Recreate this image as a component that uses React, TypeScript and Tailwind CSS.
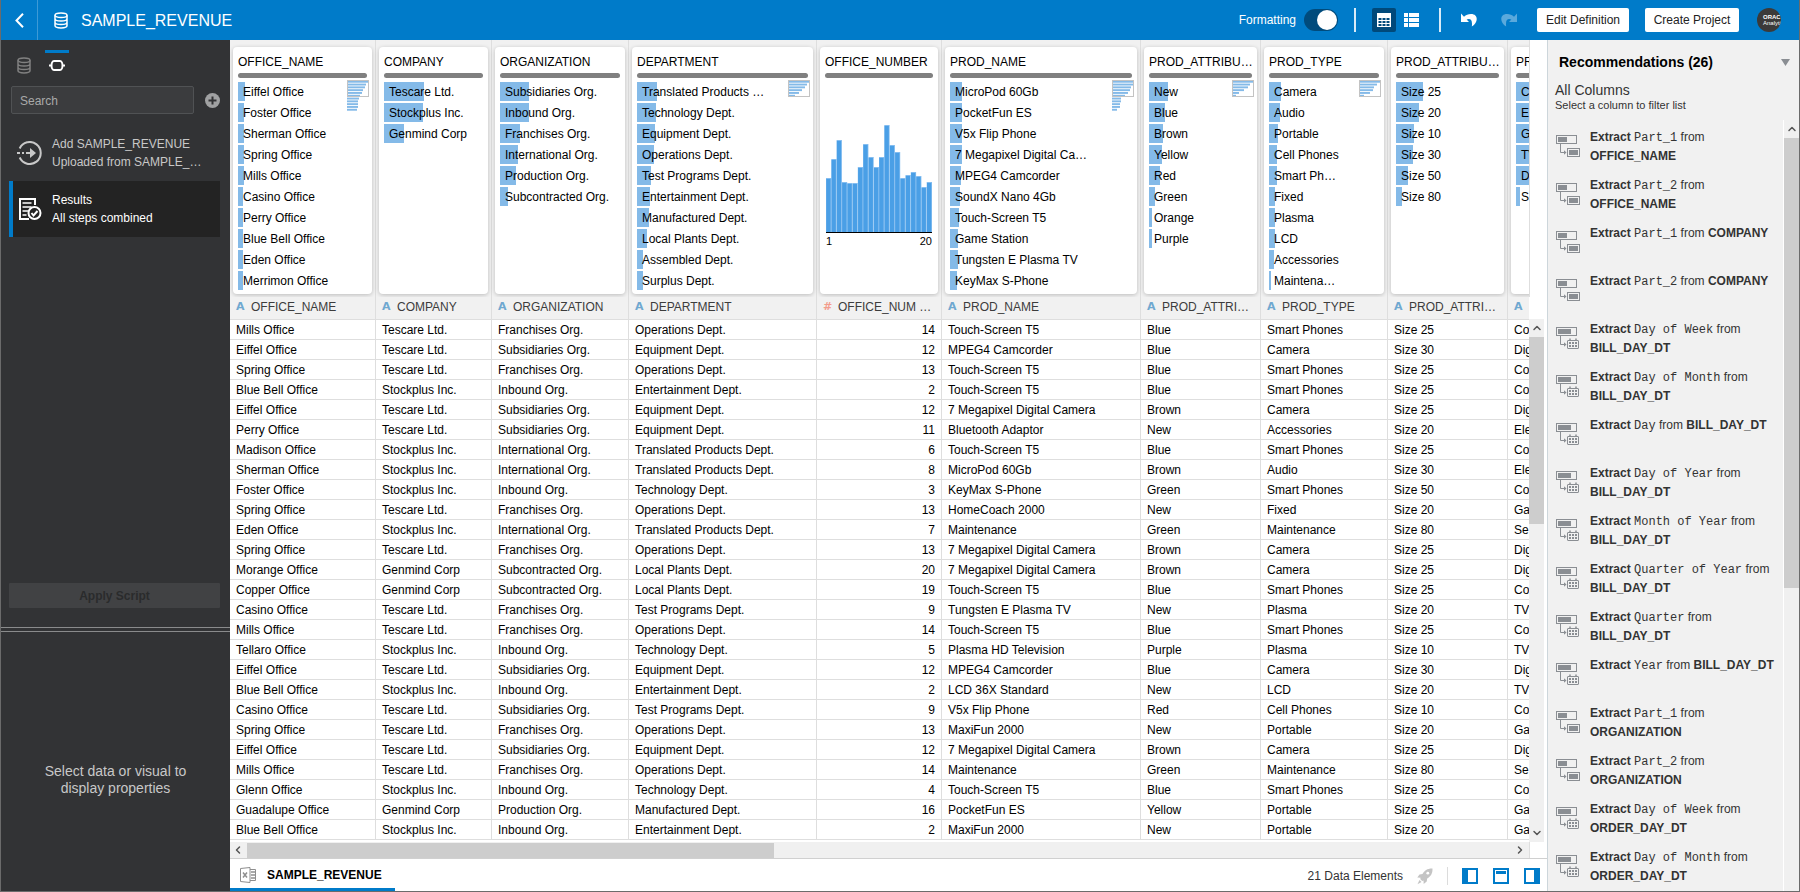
import { useState } from "react";
import clsx from "clsx";
import { ChevronDown, ChevronLeft, ChevronRight, ChevronUp } from "lucide-react";

type Valor = [label: string, bar: number];

type Column = {
  title: string;
  header: string;
  width: string;
  numeric?: boolean;
  values?: Valor[];
  overview?: number[];
};

const COLUMNS: Column[] = [
  {
    title: "OFFICE_NAME",
    header: "OFFICE_NAME",
    width: "w-[146px]",
    values: [
      ["Eiffel Office", 7],
      ["Foster Office", 6],
      ["Sherman Office", 6],
      ["Spring Office", 6],
      ["Mills Office", 6],
      ["Casino Office", 5],
      ["Perry Office", 5],
      ["Blue Bell Office", 5],
      ["Eden Office", 5],
      ["Merrimon Office", 5],
    ],
    overview: [20, 18, 17, 15, 14, 12, 12, 11, 11, 11, 10],
  },
  {
    title: "COMPANY",
    header: "COMPANY",
    width: "w-[116px]",
    values: [
      ["Tescare Ltd.", 40],
      ["Stockplus Inc.", 39],
      ["Genmind Corp", 20],
    ],
  },
  {
    title: "ORGANIZATION",
    header: "ORGANIZATION",
    width: "w-[137px]",
    values: [
      ["Subsidiaries Org.", 29],
      ["Inbound Org.", 29],
      ["Franchises Org.", 20],
      ["International Org.", 18],
      ["Production Org.", 16],
      ["Subcontracted Org.", 8],
    ],
  },
  {
    title: "DEPARTMENT",
    header: "DEPARTMENT",
    width: "w-[188px]",
    values: [
      ["Translated Products …", 20],
      ["Technology Dept.", 19],
      ["Equipment Dept.", 18],
      ["Operations Dept.", 17],
      ["Test Programs Dept.", 14],
      ["Entertainment Dept.", 13],
      ["Manufactured Dept.", 12],
      ["Local Plants Dept.", 10],
      ["Assembled Dept.", 6],
      ["Surplus Dept.", 6],
    ],
    overview: [20, 18, 16, 13, 10, 6],
  },
  {
    title: "OFFICE_NUMBER",
    header: "OFFICE_NUM …",
    width: "w-[125px]",
    numeric: true,
  },
  {
    title: "PROD_NAME",
    header: "PROD_NAME",
    width: "w-[199px]",
    values: [
      ["MicroPod 60Gb", 12],
      ["PocketFun ES", 12],
      ["V5x Flip Phone", 12],
      ["7 Megapixel Digital Ca…", 12],
      ["MPEG4 Camcorder", 11],
      ["SoundX Nano 4Gb", 10],
      ["Touch-Screen T5", 9],
      ["Game Station", 8],
      ["Tungsten E Plasma TV", 8],
      ["KeyMax S-Phone", 7],
    ],
    overview: [20, 20, 18, 17, 15, 12, 9, 9, 8, 8, 5],
  },
  {
    title: "PROD_ATTRIBU…",
    header: "PROD_ATTRI…",
    width: "w-[120px]",
    values: [
      ["New", 19],
      ["Blue", 16],
      ["Brown", 14],
      ["Yellow", 13],
      ["Red", 11],
      ["Green", 6],
      ["Orange", 3],
      ["Purple", 3],
    ],
    overview: [20, 17, 15, 11, 6, 3],
  },
  {
    title: "PROD_TYPE",
    header: "PROD_TYPE",
    width: "w-[127px]",
    values: [
      ["Camera", 12],
      ["Audio", 11],
      ["Portable", 9],
      ["Cell Phones", 8],
      ["Smart Ph…", 8],
      ["Fixed", 6],
      ["Plasma", 6],
      ["LCD", 6],
      ["Accessories", 5],
      ["Maintena…", 2],
    ],
    overview: [20, 17, 14, 13, 10, 4],
  },
  {
    title: "PROD_ATTRIBU…",
    header: "PROD_ATTRI…",
    width: "w-[120px]",
    values: [
      ["Size 25", 27],
      ["Size 20", 23],
      ["Size 10", 18],
      ["Size 30", 17],
      ["Size 50", 12],
      ["Size 80", 6],
    ],
  },
  {
    title: "PR",
    header: "",
    width: "w-[120px]",
    values: [
      ["C", 40],
      ["E", 36],
      ["G", 30],
      ["TV", 26],
      ["D", 22],
      ["S", 4],
    ],
  },
];

const ROWS: string[][] = [
  ["Mills Office", "Tescare Ltd.", "Franchises Org.", "Operations Dept.", "14", "Touch-Screen T5", "Blue", "Smart Phones", "Size 25", "Co"],
  ["Eiffel Office", "Tescare Ltd.", "Subsidiaries Org.", "Equipment Dept.", "12", "MPEG4 Camcorder", "Blue", "Camera", "Size 30", "Dig"],
  ["Spring Office", "Tescare Ltd.", "Franchises Org.", "Operations Dept.", "13", "Touch-Screen T5", "Blue", "Smart Phones", "Size 25", "Co"],
  ["Blue Bell Office", "Stockplus Inc.", "Inbound Org.", "Entertainment Dept.", "2", "Touch-Screen T5", "Blue", "Smart Phones", "Size 25", "Co"],
  ["Eiffel Office", "Tescare Ltd.", "Subsidiaries Org.", "Equipment Dept.", "12", "7 Megapixel Digital Camera", "Brown", "Camera", "Size 25", "Dig"],
  ["Perry Office", "Tescare Ltd.", "Subsidiaries Org.", "Equipment Dept.", "11", "Bluetooth Adaptor", "New", "Accessories", "Size 20", "Ele"],
  ["Madison Office", "Stockplus Inc.", "International Org.", "Translated Products Dept.", "6", "Touch-Screen T5", "Blue", "Smart Phones", "Size 25", "Co"],
  ["Sherman Office", "Stockplus Inc.", "International Org.", "Translated Products Dept.", "8", "MicroPod 60Gb", "Brown", "Audio", "Size 30", "Ele"],
  ["Foster Office", "Stockplus Inc.", "Inbound Org.", "Technology Dept.", "3", "KeyMax S-Phone", "Green", "Smart Phones", "Size 50", "Co"],
  ["Spring Office", "Tescare Ltd.", "Franchises Org.", "Operations Dept.", "13", "HomeCoach 2000", "New", "Fixed", "Size 20", "Ga"],
  ["Eden Office", "Stockplus Inc.", "International Org.", "Translated Products Dept.", "7", "Maintenance", "Green", "Maintenance", "Size 80", "Se"],
  ["Spring Office", "Tescare Ltd.", "Franchises Org.", "Operations Dept.", "13", "7 Megapixel Digital Camera", "Brown", "Camera", "Size 25", "Dig"],
  ["Morange Office", "Genmind Corp", "Subcontracted Org.", "Local Plants Dept.", "20", "7 Megapixel Digital Camera", "Brown", "Camera", "Size 25", "Dig"],
  ["Copper Office", "Genmind Corp", "Subcontracted Org.", "Local Plants Dept.", "19", "Touch-Screen T5", "Blue", "Smart Phones", "Size 25", "Co"],
  ["Casino Office", "Tescare Ltd.", "Franchises Org.", "Test Programs Dept.", "9", "Tungsten E Plasma TV", "New", "Plasma", "Size 20", "TV"],
  ["Mills Office", "Tescare Ltd.", "Franchises Org.", "Operations Dept.", "14", "Touch-Screen T5", "Blue", "Smart Phones", "Size 25", "Co"],
  ["Tellaro Office", "Stockplus Inc.", "Inbound Org.", "Technology Dept.", "5", "Plasma HD Television", "Purple", "Plasma", "Size 10", "TV"],
  ["Eiffel Office", "Tescare Ltd.", "Subsidiaries Org.", "Equipment Dept.", "12", "MPEG4 Camcorder", "Blue", "Camera", "Size 30", "Dig"],
  ["Blue Bell Office", "Stockplus Inc.", "Inbound Org.", "Entertainment Dept.", "2", "LCD 36X Standard", "New", "LCD", "Size 20", "TV"],
  ["Casino Office", "Tescare Ltd.", "Subsidiaries Org.", "Test Programs Dept.", "9", "V5x Flip Phone", "Red", "Cell Phones", "Size 10", "Co"],
  ["Spring Office", "Tescare Ltd.", "Franchises Org.", "Operations Dept.", "13", "MaxiFun 2000", "New", "Portable", "Size 20", "Ga"],
  ["Eiffel Office", "Tescare Ltd.", "Subsidiaries Org.", "Equipment Dept.", "12", "7 Megapixel Digital Camera", "Brown", "Camera", "Size 25", "Dig"],
  ["Mills Office", "Tescare Ltd.", "Franchises Org.", "Operations Dept.", "14", "Maintenance", "Green", "Maintenance", "Size 80", "Se"],
  ["Glenn Office", "Stockplus Inc.", "Inbound Org.", "Technology Dept.", "4", "Touch-Screen T5", "Blue", "Smart Phones", "Size 25", "Co"],
  ["Guadalupe Office", "Genmind Corp", "Production Org.", "Manufactured Dept.", "16", "PocketFun ES", "Yellow", "Portable", "Size 25", "Ga"],
  ["Blue Bell Office", "Stockplus Inc.", "Inbound Org.", "Entertainment Dept.", "2", "MaxiFun 2000", "New", "Portable", "Size 20", "Ga"],
];

const HISTOGRAM = [54, 73, 92, 50, 49, 49, 65, 88, 75, 65, 75, 107, 87, 80, 54, 57, 60, 56, 45, 50];

const RECOMMENDATIONS: [part: string, column: string][] = [
  ["Part_1", "OFFICE_NAME"],
  ["Part_2", "OFFICE_NAME"],
  ["Part_1", "COMPANY"],
  ["Part_2", "COMPANY"],
  ["Day of Week", "BILL_DAY_DT"],
  ["Day of Month", "BILL_DAY_DT"],
  ["Day", "BILL_DAY_DT"],
  ["Day of Year", "BILL_DAY_DT"],
  ["Month of Year", "BILL_DAY_DT"],
  ["Quarter of Year", "BILL_DAY_DT"],
  ["Quarter", "BILL_DAY_DT"],
  ["Year", "BILL_DAY_DT"],
  ["Part_1", "ORGANIZATION"],
  ["Part_2", "ORGANIZATION"],
  ["Day of Week", "ORDER_DAY_DT"],
  ["Day of Month", "ORDER_DAY_DT"],
];

function DatabaseIcon({ className }: { className?: string }) {
  return (
    <svg width="14" height="17" viewBox="0 0 14 17" fill="none" stroke="currentColor" strokeWidth="1.5" className={className}>
      <ellipse cx="7" cy="3.2" rx="6" ry="2.3" />
      <path d="M1 3.2v10.4c0 1.3 2.7 2.4 6 2.4s6-1.1 6-2.4V3.2M1 6.8c0 1.3 2.7 2.3 6 2.3s6-1 6-2.3M1 10.3c0 1.3 2.7 2.3 6 2.3s6-1 6-2.3" />
    </svg>
  );
}

function UndoIcon({ className }: { className?: string }) {
  return (
    <svg width="16" height="14" viewBox="0 0 16 14" fill="currentColor" className={className}>
      <path d="M0 .5V9h8L5.6 6.6C9 5.2 11.8 6.6 10.8 13.5 17.5 9.5 17.5 1 10 1 7 1 5 2 3 3.7Z" />
    </svg>
  );
}

function ExtractIcon({ date }: { date: boolean }) {
  return (
    <svg width="24" height="23" viewBox="0 0 24 23" fill="none" stroke="#8a8e93" className="mt-[7px] shrink-0">
      <rect x="0.5" y="0.5" width="20" height="8" />
      <rect x="2" y="2" width={date ? 13 : 9} height="5" fill="#8a8e93" stroke="none" />
      <path d="M4.5 9v8.5H9" />
      <path d="M8 15.3l2.5 2.2L8 19.7Z" fill="#8a8e93" stroke="none" />
      {date ? (
        <>
          <rect x="11.5" y="13.5" width="11" height="8" rx="0.5" />
          <path d="M14 11.5v2M20 11.5v2" strokeWidth="1.5" />
          <path d="M13 16h2m1 0h2m1 0h2M13 19h2m1 0h2m1 0h2" strokeWidth="2" />
        </>
      ) : (
        <>
          <rect x="11.5" y="13.5" width="12" height="8" />
          <rect x="13" y="15" width="9" height="5" fill="#8a8e93" stroke="none" />
        </>
      )}
    </svg>
  );
}

function Overview({ bars }: { bars: number[] }) {
  return (
    <svg width="22" height="32" viewBox="0 0 22 32" className="absolute right-[3px] top-[33px]">
      {bars.map((w, i) => (
        <rect key={i} x={i < 6 ? 1 : 0} y={0.8 + i * 2.8} width={w} height="1.9" fill="#84bae8" />
      ))}
      <rect x="0.5" y="0.5" width="21" height="16" fill="none" stroke="#c3c3c3" />
    </svg>
  );
}

function Histogram() {
  return (
    <div className="mt-11 px-px">
      <svg viewBox="0 0 106 111" className="block w-full">
        {HISTOGRAM.map((h, i) => (
          <g key={i}>
            <rect x={i * 5.3} y={110 - h} width="5.3" height={h} fill="#84bdf0" />
            <rect x={i * 5.3 + 0.3} y={111 - h} width="4.2" height={h - 1} fill="#4a9fe6" />
          </g>
        ))}
        <rect y="110" width="106" height="1" fill="#000" />
      </svg>
      <div className="flex justify-between text-[11px] leading-4">
        <span>1</span>
        <span>20</span>
      </div>
    </div>
  );
}

function ColumnCard({ column }: { column: Column }) {
  return (
    <div className={clsx("shrink-0 border-r border-[#dedede] px-[3px] pt-[7px] pb-[3px]", column.width)}>
      <div className="relative h-[247px] rounded-[4px] bg-white px-[5px] pt-1.5 shadow-[0_1px_4px_rgba(0,0,0,0.22)]">
        <h3 className="mb-px overflow-hidden whitespace-nowrap leading-[19px]">{column.title}</h3>
        <div className="mb-1 h-[5px] rounded-full bg-[#808080]" />
        {column.numeric && <Histogram />}
        {column.values && (
          <ul className="flex flex-col gap-0.5">
            {column.values.map(([label, bar]) => (
              <li key={label} className="relative h-[19px] whitespace-nowrap pl-[5px] leading-[21px]">
                <span className="absolute inset-y-0 left-0 bg-[#84bae8]" style={{ width: bar }} />
                <span className="relative">{label}</span>
              </li>
            ))}
          </ul>
        )}
        {column.overview && <Overview bars={column.overview} />}
      </div>
    </div>
  );
}

function TopBar() {
  const [formatting, setFormatting] = useState(true);

  return (
    <header className="flex h-10 shrink-0 items-center bg-[#007bc9] text-white">
      <button type="button" aria-label="Back" className="flex h-10 w-[37px] items-center justify-center border-r border-[#3d9ad6]">
        <svg width="9" height="15" viewBox="0 0 9 15" fill="none" stroke="currentColor" strokeWidth="2">
          <path d="M8 .8 1.5 7.5 8 14.2" />
        </svg>
      </button>
      <DatabaseIcon className="ml-4" />
      <h1 className="ml-[13px] pt-0.5 text-base">SAMPLE_REVENUE</h1>

      <div className="ml-auto flex items-center pr-[18px]">
        <label className="flex items-center gap-2">
          Formatting
          <input
            type="checkbox"
            checked={formatting}
            onChange={(e) => setFormatting(e.target.checked)}
            className="relative h-[22px] w-[34px] appearance-none rounded-full bg-[#004b7c] before:absolute before:left-0 before:top-px before:h-5 before:w-5 before:rounded-full before:bg-white checked:before:left-[13px]"
          />
        </label>
        <span className="ml-4 h-6 w-0.5 bg-[#d9ebf7]" />
        <button type="button" aria-label="Grid view" className="ml-4 flex h-6 w-6 items-center justify-center rounded-[2px] bg-[#00497a]">
          <svg width="14" height="14" viewBox="0 0 14 14">
            <rect width="14" height="14" fill="#fff" />
            <path d="M1.5 5h3v2h-3zM5.5 5h3v2h-3zM9.5 5h3v2h-3zM1.5 8h3v2h-3zM5.5 8h3v2h-3zM9.5 8h3v2h-3zM1.5 11h3v2h-3zM5.5 11h3v2h-3zM9.5 11h3v2h-3z" fill="#00497a" />
          </svg>
        </button>
        <button type="button" aria-label="List view" className="ml-2">
          <svg width="15" height="14" viewBox="0 0 15 14" fill="#fff">
            <path d="M0 0h4v4H0zM5 0h10v4H5zM0 5h4v4H0zM5 5h10v4H5zM0 10h4v4H0zM5 10h10v4H5z" />
          </svg>
        </button>
        <span className="ml-5 h-6 w-0.5 bg-[#d9ebf7]" />
        <button type="button" aria-label="Undo" className="ml-5">
          <UndoIcon />
        </button>
        <button type="button" aria-label="Redo" className="ml-6 text-[#5aa9dc]">
          <UndoIcon className="-scale-x-100" />
        </button>
        <button type="button" className="ml-5 h-6 w-[92px] rounded-[2px] bg-white text-[#222]">
          Edit Definition
        </button>
        <button type="button" className="ml-4 h-6 w-[94px] rounded-[2px] bg-white text-[#222]">
          Create Project
        </button>
        <div className="ml-[18px] flex h-6 w-6 flex-col justify-center overflow-hidden whitespace-nowrap rounded-full bg-[#3b3a39] pl-1.5 text-[6px] leading-[6px]">
          <span className="font-bold">ORAC</span>
          <span>Analytic</span>
        </div>
      </div>
    </header>
  );
}

function Sidebar() {
  const [search, setSearch] = useState("");

  return (
    <aside className="flex w-[229px] shrink-0 flex-col bg-[#323335] text-[#c8c8c8]">
      <div className="flex h-[587px] flex-col pr-2.5 pl-2">
        <div className="flex h-[46px] items-start pt-2.5">
          <button type="button" aria-label="Data" className="mt-[7px] ml-2 text-[#808080]">
            <DatabaseIcon />
          </button>
          <button type="button" aria-label="Steps" className="ml-[14px] flex h-7 w-6 flex-col items-center border-t-3 border-[#007bc9] pt-[7px] text-white">
            <svg width="16" height="11" viewBox="0 0 16 11" fill="none" stroke="currentColor" strokeWidth="2">
              <path d="M5 1h6c1.500 0 2.500 2.500 2.500 4.500S12.500 10 11 10H5C3.500 10 2.500 7.500 2.500 5.500S3.500 1 5 1ZM0 5.500h2.500M13.500 5.500H16" />
            </svg>
          </button>
        </div>
        <div className="flex items-center pl-0.5">
          <input
            type="text"
            aria-label="Search"
            placeholder="Search"
            value={search}
            onChange={(e) => setSearch(e.target.value)}
            className="h-7 w-[183px] rounded-[2px] border border-[#505254] bg-[#3b3c3e] px-2 pt-0.5 placeholder:text-[#a9a9a9]"
          />
          <button type="button" aria-label="Add step" className="ml-[11px]">
            <svg width="15" height="15" viewBox="0 0 15 15">
              <circle cx="7.5" cy="7.5" r="7.5" fill="#a0a1a2" />
              <path d="M7.5 3.5v8M3.5 7.5h8" stroke="#323335" strokeWidth="2" />
            </svg>
          </button>
        </div>

        <button type="button" className="mt-[11px] flex h-14 items-center gap-2.5 pl-2 text-left leading-[18px]">
          <svg width="25" height="24" viewBox="0 0 25 24" fill="none" stroke="currentColor" strokeWidth="2">
            <path d="M2.7 7.5A11 11 0 1 1 2.7 16.5" />
            <path d="M0 12h3M5 12h2M9 12h6" />
            <path d="M13 7l6 5-6 5Z" fill="currentColor" stroke="none" />
          </svg>
          <span>
            Add SAMPLE_REVENUE
            <br />
            Uploaded from SAMPLE_…
          </span>
        </button>
        <button type="button" className="flex h-14 items-center gap-2.5 border-l-4 border-[#007bc9] bg-[#232323] pl-[5px] text-left leading-[18px] text-white">
          <svg width="24" height="24" viewBox="0 0 24 24" fill="none" stroke="currentColor" strokeWidth="2">
            <path d="M17 8V2H2v20h9" />
            <path d="M4.5 6h9M4.5 10h9M4.5 14h6M4.5 18h4" strokeWidth="1.5" />
            <circle cx="16.5" cy="16" r="6" />
            <path d="M13.5 16l2 2.500 4-4.500" />
          </svg>
          <span>
            Results
            <br />
            All steps combined
          </span>
        </button>

        <button type="button" disabled className="mt-auto mb-[19px] h-[25px] rounded-[1px] bg-[#414244] font-bold text-[#2a2b2c]">
          Apply Script
        </button>
      </div>

      <div className="h-[5px] border-y border-[#8a8b8c]" />
      <div className="flex flex-1 items-center justify-center pt-9">
        <p className="w-40 text-center text-sm leading-[17px]">Select data or visual to display properties</p>
      </div>
    </aside>
  );
}

function DataTable() {
  return (
    <table className="w-max table-fixed border-separate border-spacing-0 text-left">
      <colgroup>
        {COLUMNS.map((column, i) => (
          <col key={i} className={column.width} />
        ))}
      </colgroup>
      <thead>
        <tr className="bg-[#f1f1f1]">
          {COLUMNS.map((column, i) => (
            <th key={i} scope="col" className="h-[23px] overflow-hidden whitespace-nowrap border-r border-b border-[#dedede] p-0 pb-0.5 pl-1.5 font-normal text-[#3c3c3c]">
              <span className="flex items-center">
                <span
                  className={clsx(
                    "w-[15px] font-['DejaVu_Sans',sans-serif] text-[11px] font-bold leading-4",
                    column.numeric ? "text-[#f39c8c]" : "text-[#6fa8d0]"
                  )}
                >
                  {column.numeric ? "#" : "A"}
                </span>
                {column.header}
              </span>
            </th>
          ))}
        </tr>
      </thead>
      <tbody>
        {ROWS.map((row, i) => (
          <tr key={i}>
            {row.map((cell, j) => (
              <td
                key={j}
                className={clsx(
                  "h-5 whitespace-nowrap border-r border-b border-[#dedede] px-1.5 pt-px pb-0 leading-[18px]",
                  COLUMNS[j].numeric && "text-right"
                )}
              >
                {cell}
              </td>
            ))}
          </tr>
        ))}
      </tbody>
    </table>
  );
}

function StatusBar() {
  return (
    <footer className="flex h-[33px] shrink-0 border-t border-[#d0d0d0] bg-white">
      <button type="button" className="flex w-[165px] items-center gap-[11px] border-b-3 border-[#007bc9] pl-2.5 pt-[3px] font-bold">
        <svg width="16" height="16" viewBox="0 0 16 16" fill="none" stroke="#8e8e8e">
          <path d="M.5 1.5 10 .5v15L.5 14.5Z" />
          <path d="M10 2.5h5.5v11H10" />
          <path d="M3 5.5l4 5M7 5.500l-4 5" strokeWidth="1.5" />
          <path d="M11 5h4M11 8h4M11 11h4" strokeWidth="1.5" />
        </svg>
        SAMPLE_REVENUE
      </button>
      <div className="ml-auto flex items-center pt-0.5 pr-[7px] text-[#333]">
        21 Data Elements
        <svg width="16" height="17" viewBox="0 0 16 17" className="ml-[14px]" fill="#c4c4c4">
          <path d="M15.5.5C10.5.3 7.5 2.5 5.5 6L2.5 6.5.3 9.5 3.7 9.7 3.2 11 5.2 13 6.5 12.5 6.7 16 9.7 13.5 10.2 10.5C13.7 8.5 15.7 5.5 15.5.5Z" />
          <path d="M2.5 12 .5 16.2 4.5 14Z" />
          <circle cx="10.8" cy="5.2" r="1.4" fill="#fff" />
        </svg>
        <span className="ml-[14px] h-[18px] w-px bg-[#dcdcdc]" />
        <div className="ml-[14px] flex gap-[15px]">
          <button type="button" aria-label="Toggle left panel" className="h-4 w-4 border-2 border-l-[6px] border-[#007bc9]" />
          <button type="button" aria-label="Toggle top panel" className="flex h-4 w-4 items-start border-2 border-[#007bc9] p-px">
            <span className="block h-[3px] w-full bg-[#007bc9]" />
          </button>
          <button type="button" aria-label="Toggle right panel" className="h-4 w-4 border-2 border-r-[6px] border-[#007bc9]" />
        </div>
      </div>
    </footer>
  );
}

function Recommendations() {
  return (
    <aside className="flex w-[252px] shrink-0 flex-col border-l border-[#cdd6db] bg-[#f1f1f1] text-[#333]">
      <div className="h-20 shrink-0">
        <div className="flex h-11 items-center justify-between pl-[11px] pr-[9px]">
          <h2 className="text-sm font-bold text-black">Recommendations (26)</h2>
          <button type="button" aria-label="Collapse">
            <svg width="9" height="7" viewBox="0 0 9 7">
              <path d="M0 0h9L4.5 7Z" fill="#8a8e93" />
            </svg>
          </button>
        </div>
        <div className="-mt-0.5 pl-[7px]">
          <p className="text-sm leading-4">All Columns</p>
          <p className="text-[11px] leading-[14px]">Select a column to filter list</p>
        </div>
      </div>
      <div className="flex min-h-0 flex-1">
        <ul className="min-w-0 flex-1 overflow-hidden pt-2 pl-2">
          {RECOMMENDATIONS.map(([part, column], i) => (
            <li key={i} className="h-12">
              <button type="button" className="flex w-full items-start gap-2.5 pr-1.5 text-left leading-[19px]">
                <ExtractIcon date={column.includes("DAY")} />
                <span>
                  <b>Extract</b> <code className="font-['Liberation_Mono',monospace] text-[12px] leading-none">{part}</code> from <b>{column}</b>
                </span>
              </button>
            </li>
          ))}
        </ul>
        <div className="flex w-4 flex-col items-center border-l border-white bg-[#f0f0f0]">
          <ChevronUp size={12} strokeWidth={3} className="my-[3px] shrink-0 text-[#555]" />
          <div className="h-[450px] w-full bg-[#cdcdcd]" />
        </div>
      </div>
    </aside>
  );
}

export default function App() {
  return (
    <div className="flex h-screen flex-col overflow-hidden border-x border-b border-[#6b6b6b] bg-white font-['Liberation_Sans',Arial,sans-serif] text-xs text-black">
      <TopBar />
      <div className="flex min-h-0 flex-1">
        <Sidebar />

        <main className="flex min-w-0 flex-1 flex-col">
          <div className="flex shrink-0">
            <div className="flex min-w-0 flex-1 overflow-hidden border-r border-[#dedede] bg-[#f1f1f1]">
              {COLUMNS.map((column, i) => (
                <ColumnCard key={i} column={column} />
              ))}
            </div>
            <div className="w-[17px]" />
          </div>

          <div className="flex min-h-0 flex-1">
            <div className="min-w-0 flex-1 overflow-hidden">
              <DataTable />
            </div>
            <div className="flex w-[18px] flex-col pt-[22px]">
              <div className="flex w-[15px] flex-1 flex-col items-center bg-[#f0f0f0]">
                <ChevronUp size={12} strokeWidth={3} className="my-[3px] shrink-0 text-[#555]" />
                <div className="h-[187px] w-full bg-[#cdcdcd]" />
                <ChevronDown size={12} strokeWidth={3} className="mt-auto mb-[3px] shrink-0 text-[#555]" />
              </div>
            </div>
          </div>

          <div className="flex h-4 shrink-0">
            <div className="flex flex-1 items-center bg-[#f0f0f0]">
              <ChevronLeft size={12} strokeWidth={3} className="mr-[3px] ml-0.5 shrink-0 text-[#555]" />
              <div className="h-[15px] w-[527px] bg-[#cdcdcd]" />
              <ChevronRight size={12} strokeWidth={3} className="ml-auto mr-[3px] shrink-0 text-[#555]" />
            </div>
            <div className="w-[18px] border-l border-[#dedede]" />
          </div>

          <StatusBar />
        </main>

        <Recommendations />
      </div>
    </div>
  );
}
